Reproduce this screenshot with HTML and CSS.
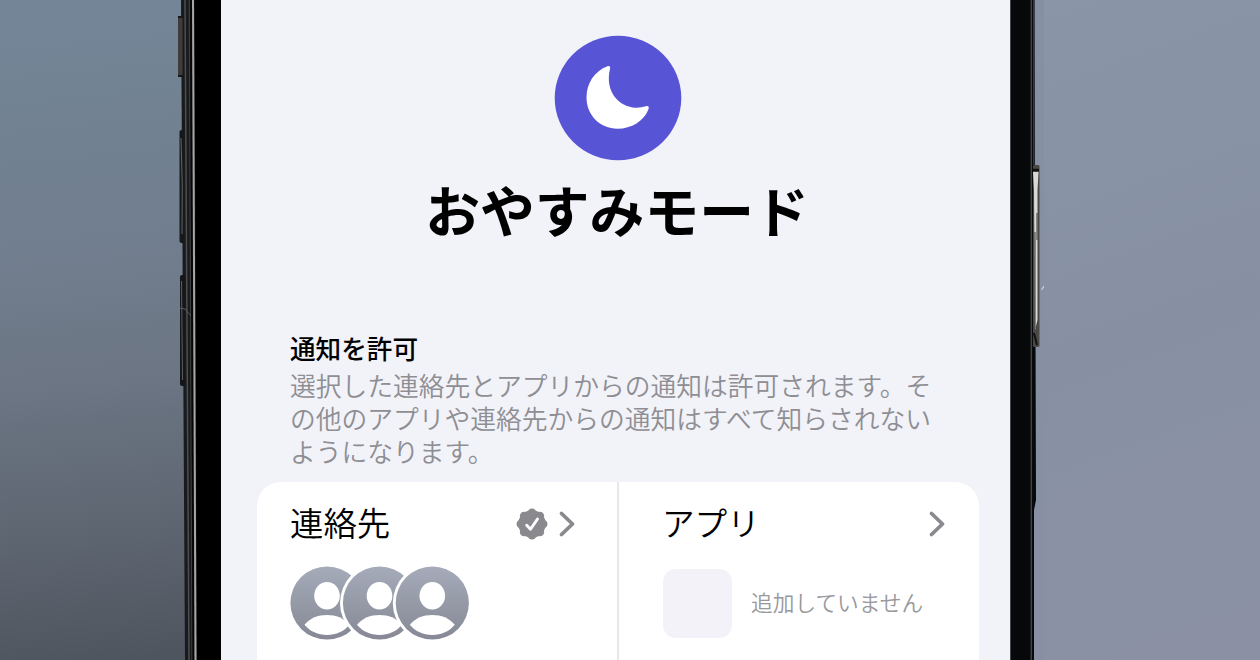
FILE: index.html
```html
<!doctype html>
<html lang="ja">
<head>
	<meta charset="utf-8">
	<title>おやすみモード</title>
	<link rel="stylesheet" href="styles.css">
</head>
<body>
	<div class="scene">
		<div class="wall wall-left"></div>

		<!-- left frame of the phone with switch and volume buttons -->
		<svg class="rail" width="43" height="660" viewBox="178 0 43 660">
			<path d="M181 0H221V660H185Z" fill="#191a1c"/>
			<path d="M185 0L189 660" stroke="#4e4e50" stroke-width="1.5"/>
			<path d="M189.300 0L192 660" stroke="#3c3c3e" stroke-width="1.300"/>
			<path d="M191 0L193.500 660" stroke="#060606" stroke-width="2"/>
			<path d="M194.500 0H221V660H197Z" fill="#000"/>
			<path d="M193 0L195.500 660" stroke="#a6a6a7" stroke-width="2"/>
			<rect x="177.500" y="17" width="5" height="60" rx="2" fill="#403c3b"/>
			<path d="M178 17H183M178 76H183" stroke="#171717" stroke-width="2"/>
			<rect x="179.500" y="130" width="5" height="113" rx="2" fill="#161819"/>
			<path d="M181 138Q183 185 182 234" stroke="#606664" fill="none"/>
			<rect x="180" y="275" width="5" height="111" rx="2" fill="#151617"/>
			<path d="M181.500 281L182.500 380" stroke="#59605f"/>
			<path d="M180 308L185 309L191 316" stroke="#595c5f" fill="none"/>
		</svg>

		<main class="screen">
			<header class="mode">
				<svg class="mode-icon" width="128" height="126" viewBox="0 0 128 126">
					<ellipse cx="64" cy="63" rx="63.300" ry="62.300" fill="#5854d6"/>
					<path d="M53.500 31.300C55.500 30.600 56.600 32 56 34C53.500 44 54.500 56 63 64.500C71 72.500 82 74.500 92 71.300C94.300 70.600 95.300 72 94.500 74.200C90 86 77.500 93.700 63.500 93.700C46 93.700 32.500 80 32.500 62.500C32.500 48.500 40.500 36 53.500 31.300Z" fill="#fff"/>
				</svg>
				<h1>おやすみモード</h1>
			</header>

			<section class="allow">
				<h2>通知を許可</h2>
				<p>選択した連絡先とアプリからの通知は許可されます。そ<br>の他のアプリや連絡先からの通知はすべて知らされない<br>ようになります。</p>
			</section>

			<div class="card">
				<div class="cell people">
					<div class="cell-head">
						<span>連絡先</span>
						<svg class="badge" width="32" height="32" viewBox="-16 -16 32 32">
							<g fill="#8a8a8e">
								<circle r="13.700"/>
								<circle cx="0" cy="-11.200" r="4.300"/>
								<circle cx="7.900" cy="-7.900" r="4.300"/>
								<circle cx="11.200" cy="0" r="4.300"/>
								<circle cx="7.900" cy="7.900" r="4.300"/>
								<circle cx="0" cy="11.200" r="4.300"/>
								<circle cx="-7.900" cy="7.900" r="4.300"/>
								<circle cx="-11.200" cy="0" r="4.300"/>
								<circle cx="-7.900" cy="-7.900" r="4.300"/>
							</g>
							<path d="M-5.300 1.200L-1.500 5.300L5.500 -5" fill="none" stroke="#fff" stroke-width="2.900" stroke-linecap="round" stroke-linejoin="round"/>
						</svg>
						<svg class="chevron" width="18" height="28" viewBox="0 0 18 28">
							<path d="M3.500 3.500L14.500 14L3.500 24.500" fill="none" stroke="#8a8a8e" stroke-width="3.800" stroke-linecap="round" stroke-linejoin="round"/>
						</svg>
					</div>
					<svg class="avatars" width="182" height="76" viewBox="0 0 182 76">
						<defs>
							<linearGradient id="shade" x2="0" y2="1">
								<stop offset="0" stop-color="#a5abb9"/>
								<stop offset="1" stop-color="#868995"/>
							</linearGradient>
							<g id="person">
								<circle r="39.500" fill="#fff"/>
								<circle r="36.600" fill="url(#shade)"/>
								<ellipse cy="-7.300" rx="12.800" ry="13.800" fill="#fff"/>
								<path d="M-22.500 21.800C-17 15 -9 12 0 12S17 15 22.500 21.800C17 28.500 9 32 0 32S-17 28.500 -22.500 21.800Z" fill="#fff"/>
							</g>
						</defs>
						<use href="#person" x="38" y="38"/>
						<use href="#person" x="90.500" y="38"/>
						<use href="#person" x="143.300" y="38"/>
					</svg>
				</div>
				<div class="cell apps">
					<div class="cell-head">
						<span>アプリ</span>
						<svg class="chevron" width="18" height="28" viewBox="0 0 18 28">
							<path d="M3.500 3.500L14.500 14L3.500 24.500" fill="none" stroke="#8a8a8e" stroke-width="3.800" stroke-linecap="round" stroke-linejoin="round"/>
						</svg>
					</div>
					<div class="empty">
						<div class="slot"></div>
						<span>追加していません</span>
					</div>
				</div>
			</div>
		</main>

		<!-- right frame with the side button -->
		<svg class="rail" width="34" height="660" viewBox="1010 0 34 660">
			<path d="M1010 0H1034.500L1036 500L1034 510V660H1010Z" fill="#07080a"/>
			<path d="M1031.300 0V660" stroke="#3f4245" stroke-width="1.500"/>
			<path d="M1033.800 0V165" stroke="#343b45" stroke-width="1.500"/>
			<path d="M1010.300 0V660" stroke="#8f9094" stroke-width=".6"/>
			<rect x="1033" y="165" width="6.500" height="182" rx="1.500" fill="#4b4946"/>
			<path d="M1033 170H1039" stroke="#111" stroke-width="2.500"/>
			<path d="M1033 172H1038.500L1037.500 190V320L1035 330L1034 190Z" fill="#d9d9d5"/>
			<path d="M1037 213V240M1035 232V328" stroke="#50504d" stroke-width="1.200"/>
			<path d="M1034 333L1037 345" stroke="#111" stroke-width="2"/>
			<path d="M1041.500 290L1044 286" stroke="#c4cdd6" stroke-width="1.200"/>
		</svg>

		<div class="wall wall-right"></div>
	</div>
</body>
</html>
```
FILE: styles.css
```css
body {
    margin: 0;
    font-family: "Noto Sans CJK JP", sans-serif;
    color: #000;
}
h1, h2, p {
    margin: 0;
}
svg {
    display: block;
    flex: none;
}
.scene {
    display: flex;
    width: 1260px;
    height: 660px;
    overflow: hidden;
    background: linear-gradient(90deg, transparent 50%, #8790a2 50%), linear-gradient(174deg, #738698, #717d8d 35%, #6b7583 50%, #5c646f 70%, #4f555f 85%, #474b55);
}
.wall-left {
    width: 178px;
}
.wall-right {
    flex: 1;
    background: linear-gradient(160deg, #8a95a8, #8790a3 50%, #8b91a3);
}

/* phone screen */
.screen {
    width: 789px;
    height: 660px;
    box-sizing: border-box;
    padding: 35px 31px 0 36px;
    background: #f2f2f9;
}
.mode {
    display: flex;
    flex-direction: column;
    align-items: center;
}
.mode h1 {
    margin-top: 7px;
    margin-right: 2px;
    font-size: 54.8px;
    line-height: 80px;
    font-weight: 700;
    white-space: nowrap;
}
.allow {
    height: 152px;
    margin-top: 82px;
    padding-left: 33px;
    white-space: nowrap;
}
.allow h2 {
    font-size: 25.6px;
    line-height: 36px;
    font-weight: 500;
}
.allow p {
    margin-top: 2px;
    font-size: 25.75px;
    line-height: 33px;
    font-weight: 350;
    color: #8e8e93;
}

/* card with the two pickers */
.card {
    display: flex;
    height: 200px;
    border-radius: 24px;
    background: #fff;
}
.cell {
    box-sizing: border-box;
    padding-top: 20px;
}
.people {
    width: 362px;
    padding-left: 33px;
    padding-right: 41px;
    border-right: 2px solid #e6e6eb;
}
.apps {
    flex: 1;
    padding-left: 43px;
    padding-right: 33px;
}
.cell-head {
    display: flex;
    align-items: center;
    height: 44px;
    font-size: 33.4px;
    font-weight: 350;
}
.cell-head span {
    flex: 1;
    padding-bottom: 5px;
}
.apps .cell-head {
    font-size: 32.6px;
}
.badge {
    margin-right: 10px;
}
.avatars {
    margin-top: 19px;
    margin-left: -1px;
}
.empty {
    display: flex;
    align-items: center;
    gap: 19px;
    margin-top: 23px;
    margin-left: 1px;
    font-size: 21.7px;
    font-weight: 350;
    color: #98989d;
    white-space: nowrap;
}
.empty span {
    padding-bottom: 4px;
}
.slot {
    width: 69px;
    height: 69px;
    border-radius: 13px;
    background: #f2f2f8;
}
```
